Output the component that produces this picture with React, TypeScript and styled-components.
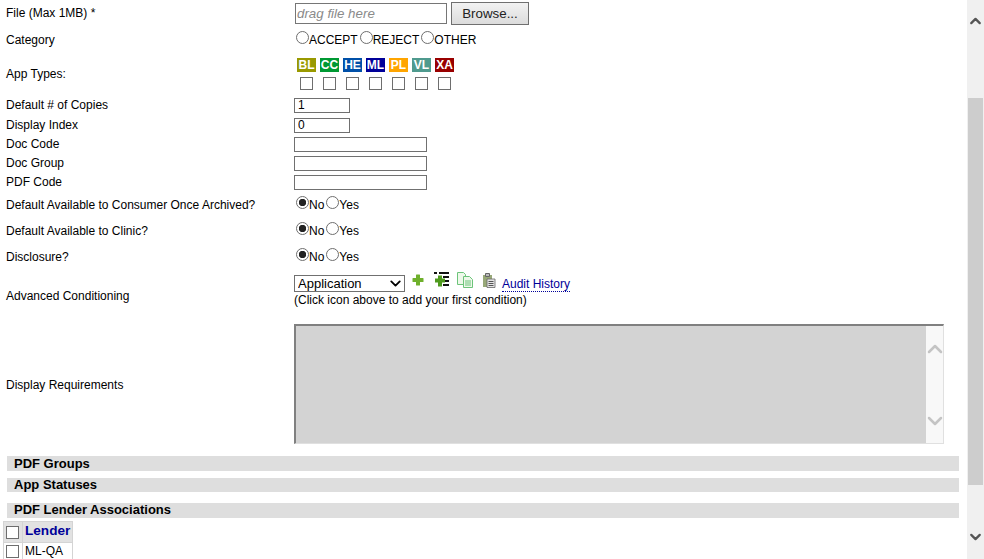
import React, { FC } from 'react';
import styled, { createGlobalStyle } from 'styled-components';
import { ChevronDown, ChevronUp } from 'lucide-react';

const GlobalStyle = createGlobalStyle`
  html, body {
    margin: 0;
    height: 559px;
    overflow: hidden;
    background: #fff;
  }
  body, input, button, select {
    font-family: "Liberation Sans", Arial, sans-serif;
    font-size: 12px;
    color: #000;
  }
`;

const Page = styled.div`
  display: flex;
  width: 984px;
  height: 559px;
  overflow: hidden;
`;

const Content = styled.div`
  width: 967px;
  flex: none;
`;

const Row = styled.div<{ $h: number }>`
  display: flex;
  align-items: center;
  height: ${ ({ $h }) => $h }px;
`;

const Label = styled.div<{ $nudge?: number }>`
  width: 288px;
  margin-top: ${ ({ $nudge = 0 }) => $nudge * 2 }px;
  padding-left: 6px;
  flex: none;
`;

const Field = styled.div`
  display: flex;
  align-items: center;
  min-width: 0;
`;

const NoYesField = styled(Field)`
  margin-bottom: 2px;
`;

const TextField = styled.input<{ $w: number }>`
  box-sizing: border-box;
  width: ${ ({ $w }) => $w }px;
  height: 15px;
  margin: 0;
  padding: 0 3px;
  border: 1px solid #707070;
  border-radius: 0;
  outline: none;
  background: #fff;
  font-size: 12px;
`;

const DropField = styled.div`
  box-sizing: border-box;
  width: 152px;
  height: 21px;
  margin-left: 1px;
  padding: 0 1px;
  border: 1px solid #767676;
  font-size: 13.33px;
  font-style: italic;
  line-height: 19px;
  color: #8a8a8a;
`;

const BrowseButton = styled.button`
  box-sizing: border-box;
  width: 78px;
  height: 23px;
  margin: 0 0 0 4px;
  padding: 0;
  border: 1px solid #707070;
  border-radius: 0;
  background: linear-gradient(#f2f2f2, #dcdcdc);
  font-size: 13.33px;
  color: #222;
`;

const RadioInput = styled.input.attrs({ type: 'radio' })`
  appearance: none;
  box-sizing: border-box;
  width: 13px;
  height: 13px;
  margin: 0 0 3px 2px;
  flex: none;
  border: 1px solid #6e6e6e;
  border-radius: 50%;
  background: #fff;

  &:checked {
    background: radial-gradient(circle, #222 0 3.4px, #fff 4px);
  }
`;

const RadioText = styled.span`
  margin-top: 1px;
`;

const TypeGrid = styled.div`
  display: grid;
  grid-template-columns: repeat(7, 19px);
  column-gap: 4px;
  row-gap: 5px;
  margin-left: 3px;
  justify-items: center;
`;

const TypeBadge = styled.span<{ $bg: string }>`
  width: 19px;
  height: 14px;
  background: ${ ({ $bg }) => $bg };
  color: #fff;
  font-size: 12px;
  font-weight: bold;
  line-height: 14px;
  text-align: center;
`;

const CheckBox = styled.input.attrs({ type: 'checkbox' })`
  display: block;
  appearance: none;
  box-sizing: border-box;
  width: 13px;
  height: 13px;
  margin: 0;
  border: 1px solid #6e6e6e;
  border-radius: 0;
  background: #fff;
`;

const ConditionStack = styled.div`
  display: flex;
  flex-direction: column;
  align-self: flex-start;
`;

const ConditionBar = styled.div`
  display: flex;
  align-items: flex-start;
  height: 24px;
`;

const SelectWrap = styled.div`
  position: relative;
  width: 111px;
  height: 17px;
  margin: 5px 7px 0 0;
  flex: none;
`;

const ConditionSelect = styled.select`
  appearance: none;
  box-sizing: border-box;
  display: block;
  width: 111px;
  height: 17px;
  margin: 0;
  padding: 0 0 0 3px;
  border: 1px solid #707070;
  border-radius: 0;
  background: #fff;
  font-size: 13px;
`;

const SelectArrow = styled(ChevronDown)`
  position: absolute;
  top: 0;
  right: 1px;
  pointer-events: none;
`;

const ToolIcon = styled.svg<{ $gap: number; $top: number }>`
  flex: none;
  margin-right: ${ ({ $gap }) => $gap }px;
  margin-top: ${ ({ $top }) => $top }px;
`;

const AuditLink = styled.a`
  margin-top: 7px;
  border-bottom: 1px dotted #000099;
  color: #000099;
  line-height: 14px;
`;

const HintText = styled.div`
  margin-top: -1px;
`;

const ReadOnlyArea = styled.div`
  display: flex;
  box-sizing: border-box;
  width: 650px;
  height: 120px;
  margin-bottom: 2px;
  border-style: solid;
  border-width: 2px 1px 1px 2px;
  border-color: #808080 #e0e0e0 #e0e0e0 #808080;
`;

const AreaFill = styled.div`
  flex: 1;
  background: #d3d3d3;
`;

const AreaScroll = styled.div`
  display: flex;
  flex-direction: column;
  align-items: center;
  justify-content: space-between;
  box-sizing: border-box;
  width: 17px;
  padding: 11px 0 10px;
  background: #f8f8f8;
  color: #c4c4c4;
`;

const SectionBar = styled.div<{ $h: number; $top: number; $lh: number }>`
  box-sizing: border-box;
  height: ${ ({ $h }) => $h }px;
  margin: ${ ({ $top }) => $top }px 8px 0 7px;
  padding-left: 7px;
  background: #dedede;
  font-size: 13px;
  font-weight: bold;
  line-height: ${ ({ $lh }) => $lh }px;
`;

const LenderTable = styled.table`
  margin: 3px 0 0 3px;
  border-collapse: collapse;
`;

const LenderCell = styled.td<{ $box?: boolean }>`
  height: 16px;
  padding: ${ ({ $box }) => ($box ? '0 3px 0 2px' : '0 2px') };
  border: 1px solid #d4d4d4;
  line-height: 14px;
`;

const HeadCell = styled(LenderCell)`
  height: 18px;
  padding-bottom: ${ ({ $box }) => ($box ? 0 : 2) }px;
  background: #e2e2e2;
  color: #000099;
  font-size: 13.6px;
  font-weight: bold;
`;

const Scrollbar = styled.div`
  display: flex;
  flex-direction: column;
  align-items: center;
  width: 17px;
  height: 559px;
  background: #f0f0f0;
  color: #555;
`;

const ScrollEnd = styled.div<{ $h: number }>`
  display: flex;
  align-items: center;
  justify-content: center;
  width: 100%;
  height: ${ ({ $h }) => $h }px;
`;

const ScrollThumb = styled.div`
  width: 15px;
  height: 387px;
  margin-top: 56px;
  background: #cdcdcd;
`;

const ScrollGap = styled.div`
  flex: 1;
`;

const Radio: FC<{ name: string; label: string; checked?: boolean }> = ({ name, label, checked }) => (
  <>
    <RadioInput name={ name } defaultChecked={ checked }/>
    <RadioText>{ label }</RadioText>
  </>
);

const NoYes: FC<{ name: string }> = ({ name }) => (
  <NoYesField>
    <Radio name={ name } label="No" checked/>
    <Radio name={ name } label="Yes"/>
  </NoYesField>
);

const APP_TYPES = [
  ['BL', '#999900'],
  ['CC', '#009933'],
  ['HE', '#0050a8'],
  ['ML', '#000099'],
  ['PL', '#ffa500'],
  ['VL', '#4f9a8e'],
  ['XA', '#990000'],
];

const App: FC = () => (
  <Page>
    <GlobalStyle/>
    <Content>
      <Row $h={ 26 }>
        <Label>File (Max 1MB) *</Label>
        <Field>
          <DropField>drag file here</DropField>
          <BrowseButton>Browse...</BrowseButton>
        </Field>
      </Row>
      <Row $h={ 26 }>
        <Label $nudge={ 1 }>Category</Label>
        <Field>
          <Radio name="category" label="ACCEPT"/>
          <Radio name="category" label="REJECT"/>
          <Radio name="category" label="OTHER"/>
        </Field>
      </Row>
      <Row $h={ 43 }>
        <Label>App Types:</Label>
        <TypeGrid>
          { APP_TYPES.map(([code, bg]) => <TypeBadge key={ code } $bg={ bg }>{ code }</TypeBadge>) }
          { APP_TYPES.map(([code]) => <CheckBox key={ code }/>) }
        </TypeGrid>
      </Row>
      <Row $h={ 20 }>
        <Label>Default # of Copies</Label>
        <TextField $w={ 56 } defaultValue="1"/>
      </Row>
      <Row $h={ 20 }>
        <Label>Display Index</Label>
        <TextField $w={ 56 } defaultValue="0"/>
      </Row>
      <Row $h={ 19 }>
        <Label $nudge={ -1 }>Doc Code</Label>
        <TextField $w={ 133 }/>
      </Row>
      <Row $h={ 19 }>
        <Label $nudge={ -1 }>Doc Group</Label>
        <TextField $w={ 133 }/>
      </Row>
      <Row $h={ 19 }>
        <Label $nudge={ -1 }>PDF Code</Label>
        <TextField $w={ 133 }/>
      </Row>
      <Row $h={ 26 }>
        <Label>Default Available to Consumer Once Archived?</Label>
        <NoYes name="consumer"/>
      </Row>
      <Row $h={ 26 }>
        <Label>Default Available to Clinic?</Label>
        <NoYes name="clinic"/>
      </Row>
      <Row $h={ 26 }>
        <Label>Disclosure?</Label>
        <NoYes name="disclosure"/>
      </Row>
      <Row $h={ 50 }>
        <Label $nudge={ 1 }>Advanced Conditioning</Label>
        <ConditionStack>
          <ConditionBar>
            <SelectWrap>
              <ConditionSelect defaultValue="Application">
                <option>Application</option>
              </ConditionSelect>
              <SelectArrow size={ 17 } strokeWidth={ 2.6 }/>
            </SelectWrap>
            <ToolIcon $gap={ 10 } $top={ 4 } width="12" height="12" viewBox="0 0 12 12">
              <path d="M4.500.5h3a.5.5 0 0 1 .5.5v3h3a.5.5 0 0 1 .5.5v3a.5.5 0 0 1-.5.5H8v3a.5.5 0 0 1-.5.5h-3a.5.5 0 0 1-.5-.5V8H1a.5.5 0 0 1-.5-.5v-3A.5.5 0 0 1 1 4h3V1a.5.5 0 0 1 .5-.5z" fill="#6fb02c"/>
            </ToolIcon>
            <ToolIcon $gap={ 8 } $top={ 2 } width="15" height="15" viewBox="0 0 15 15">
              <path d="M0 0h3v2H0zM5 0h10v2H5zM9 4h6v2H9zM10 8h5v2h-5zM9 12h6v2H9z" fill="#111"/>
              <path d="M4 3.500h4v3h3v4H8v4H4v-4H1v-4h3z" fill="#4f9a1e"/>
            </ToolIcon>
            <ToolIcon $gap={ 9 } $top={ 2 } width="16" height="16" viewBox="0 0 16 16" fill="#eef8ea" stroke="#6cc47a">
              <path d="M.5.5h6l2 2v10h-8z"/>
              <path d="M6.500 4.500h6l3 3v8h-9z"/>
              <path d="M8 9h6M8 11h6M8 13h6" fill="none"/>
            </ToolIcon>
            <ToolIcon $gap={ 6 } $top={ 2 } width="14" height="16" viewBox="0 0 14 16">
              <path d="M1 3h9v12H1z" fill="#98a878"/>
              <path d="M3.500 1.500h4v3h-4z" fill="#bbb" stroke="#666"/>
              <path d="M5 7h8v8.500H5z" fill="#e4e4e4" stroke="#666" strokeWidth=".8"/>
              <path d="M6.500 9.500h5M6.500 11.500h5M6.500 13.500h5" stroke="#555"/>
            </ToolIcon>
            <AuditLink>Audit History</AuditLink>
          </ConditionBar>
          <HintText>(Click icon above to add your first condition)</HintText>
        </ConditionStack>
      </Row>
      <Row $h={ 130 }>
        <Label>Display Requirements</Label>
        <ReadOnlyArea>
          <AreaFill/>
          <AreaScroll>
            <ChevronUp size={ 24 } strokeWidth={ 2.5 }/>
            <ChevronDown size={ 24 } strokeWidth={ 2.5 }/>
          </AreaScroll>
        </ReadOnlyArea>
      </Row>
      <SectionBar $h={ 15 } $top={ 6 } $lh={ 15 }>PDF Groups</SectionBar>
      <SectionBar $h={ 14 } $top={ 7 } $lh={ 13 }>App Statuses</SectionBar>
      <SectionBar $h={ 15 } $top={ 11 } $lh={ 14 }>PDF Lender Associations</SectionBar>
      <LenderTable>
        <tbody>
          <tr>
            <HeadCell $box><CheckBox/></HeadCell>
            <HeadCell>Lender</HeadCell>
          </tr>
          <tr>
            <LenderCell $box><CheckBox/></LenderCell>
            <LenderCell>ML-QA</LenderCell>
          </tr>
        </tbody>
      </LenderTable>
    </Content>
    <Scrollbar>
      <ScrollEnd $h={ 42 }><ChevronUp size={ 22 } strokeWidth={ 3.2 }/></ScrollEnd>
      <ScrollThumb/>
      <ScrollGap/>
      <ScrollEnd $h={ 44 }><ChevronDown size={ 22 } strokeWidth={ 3.2 }/></ScrollEnd>
    </Scrollbar>
  </Page>
);

export default App;
